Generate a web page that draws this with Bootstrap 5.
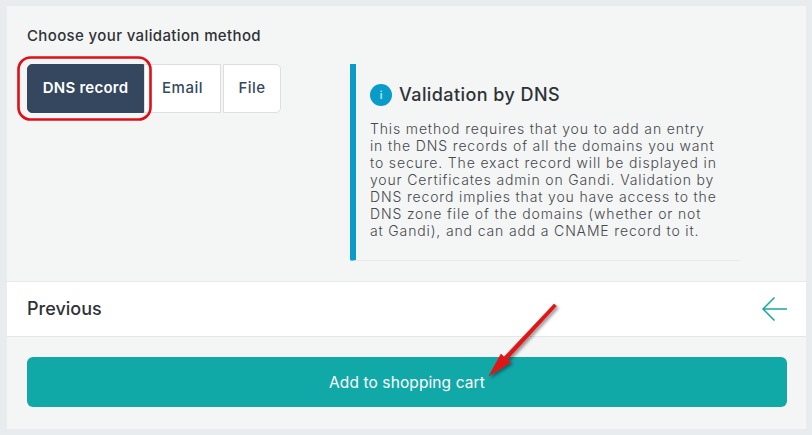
<!DOCTYPE html>
<html lang="en">
<head>
<meta charset="utf-8">
<title>Validation method</title>
<link href="https://cdn.jsdelivr.net/npm/bootstrap@5.3.0/dist/css/bootstrap.min.css" rel="stylesheet">
<style>
html,body{height:100%;}
body{background:#e9ecef;font-family:Inter,"Liberation Sans",sans-serif;color:#2b2e33;overflow:hidden;}
.frame{position:relative;width:799px;height:423px;margin:6px 0 0 7px;background:#f4f5f5;display:flex;flex-direction:column;}
.top-zone{height:275px;padding:21px 20px 0;display:flex;}
.left-zone{width:323px;flex:none;}
.pick-title{font-size:15px;font-weight:500;line-height:18px;letter-spacing:.37px;margin:0 0 19px;color:#2f3236;white-space:nowrap;}
.choice-group{display:flex;height:49px;}
.choice{background:#fff;border:1px solid #dcdee0;color:#34495e;font-size:15px;font-weight:500;letter-spacing:.5px;padding:0 0 1px;border-radius:0;}
.choice-dns{width:117px;background:#34475e;border-color:#34475e;color:#fff;font-weight:600;letter-spacing:.25px;border-radius:5px 0 0 5px;}
.choice-email{width:77px;}
.choice-file{width:58px;margin-left:2px;border-radius:0 5px 5px 0;}
.info-zone{width:390px;height:197px;margin-top:37px;border-left:6px solid #0a9cc9;border-bottom:1px solid #e8e9ea;border-bottom-left-radius:2px;padding:19px 14px 0 14px;align-self:flex-start;}
.info-head{display:flex;align-items:center;gap:7px;margin-bottom:13px;height:24px;}
.info-dot{width:22px;height:22px;border-radius:50%;background:#0a9cc9;color:#b9e4f1;font-size:10px;font-weight:700;display:flex;align-items:center;justify-content:center;flex:none;}
.info-title{font-size:18px;font-weight:500;letter-spacing:.43px;margin:0;line-height:24px;color:#2f3236;}
.info-text{font-size:14px;font-weight:300;letter-spacing:.85px;line-height:17px;margin:0;color:#45494e;white-space:nowrap;}
.prev-row{height:56px;background:#fff;border-top:1px solid #e8e9ea;border-bottom:1px solid #e4e6e8;display:flex;align-items:center;justify-content:space-between;padding:0 19px 0 20px;}
.prev-label{font-size:18px;font-weight:500;color:#2f3236;padding-bottom:2px;}
.bottom-zone{padding:20px 19px 0 20px;}
.cart-btn{display:block;width:100%;height:50px;background:#11a8a8;border:0;border-radius:6px;color:#fff;font-size:15.5px;font-weight:400;letter-spacing:.1px;padding:2px 0 0;}
.cart-btn:hover{background:#11a8a8;color:#fff;}
.notes{position:absolute;left:-7px;top:-6px;width:812px;height:435px;pointer-events:none;}
</style>
</head>
<body>
<div class="frame">
  <div class="top-zone">
    <div class="left-zone">
      <p class="pick-title">Choose your validation method</p>
      <div class="choice-group">
        <button type="button" class="btn choice choice-dns">DNS record</button>
        <button type="button" class="btn choice choice-email">Email</button>
        <button type="button" class="btn choice choice-file">File</button>
      </div>
    </div>
    <div class="info-zone">
      <div class="info-head">
        <span class="info-dot">i</span>
        <h2 class="info-title">Validation by DNS</h2>
      </div>
      <p class="info-text">This method requires that you to add an entry<br>in the DNS records of all the domains you want<br>to secure. The exact record will be displayed in<br>your Certificates admin on Gandi. Validation by<br>DNS record implies that you have access to the<br>DNS zone file of the domains (whether or not<br>at Gandi), and can add a CNAME record to it.</p>
    </div>
  </div>
  <div class="prev-row">
    <span class="prev-label">Previous</span>
    <svg width="25" height="24" viewBox="0 0 25 24" fill="none" stroke="#17a8a0" stroke-width="1.5" aria-hidden="true"><path d="M25 12H1M12.500.500 1 12l11.500 11.500"/></svg>
  </div>
  <div class="bottom-zone">
    <button type="button" class="btn cart-btn">Add to shopping cart</button>
  </div>
  <svg class="notes" viewBox="0 0 812 435" aria-hidden="true">
    <defs>
      <filter id="soft" x="-30%" y="-30%" width="160%" height="160%"><feDropShadow dx="2" dy="2" stdDeviation="1.500" flood-color="#000" flood-opacity=".4"/></filter>
    </defs>
    <rect x="18.500" y="57.500" width="132" height="62" rx="12" fill="none" stroke="#df0f17" stroke-width="2.600"/>
    <path d="M554 304 504 357l-3-3-12 22 22-14-4-2 49.500-54z" fill="#e01418" stroke="#e01418" stroke-width=".6" stroke-linejoin="round" filter="url(#soft)"/>
  </svg>
</div>
</body>
</html>
